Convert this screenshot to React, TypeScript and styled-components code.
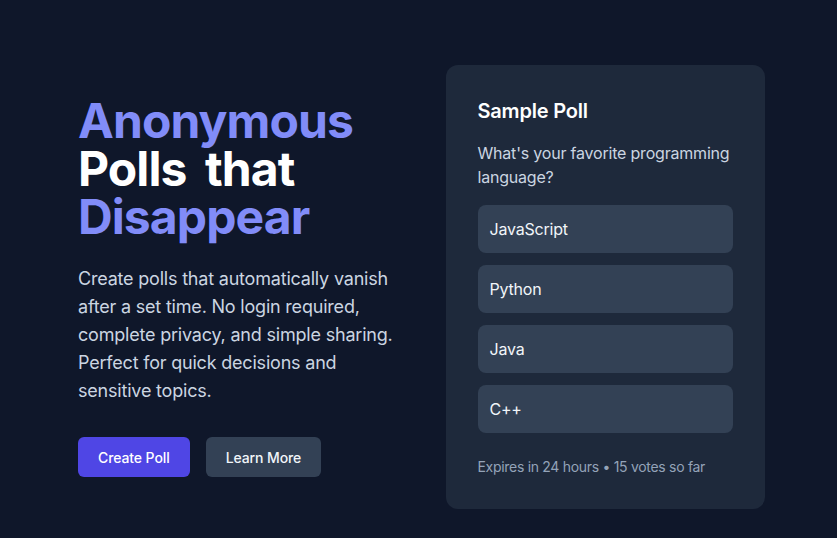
import React from "react";
import styled, { createGlobalStyle } from "styled-components";

const GlobalStyle = createGlobalStyle`
  html, body {
    margin: 0;
    padding: 0;
    background: #0f172a;
  }
  body {
    font-family: Inter, "Noto Sans", "Liberation Sans", sans-serif;
    color: #f8fafc;
    letter-spacing: -0.2px;
    -webkit-font-smoothing: antialiased;
  }
`;

const Page = styled.main`
  min-height: 538px;
  box-sizing: border-box;
  padding: 65px 72px 30px 78px;
`;

const Hero = styled.section`
  display: grid;
  grid-template-columns: 1fr 1fr;
  gap: 48px;
  align-items: center;
  width: 687px;
`;

const Intro = styled.div`
  display: flex;
  flex-direction: column;
`;

const Headline = styled.h1`
  margin: 0 0 24px;
  font-size: 48px;
  line-height: 48px;
  font-weight: 700;
  letter-spacing: -0.9px;
  word-spacing: 8px;
  color: #ffffff;
`;

const Accent = styled.span`
  color: #818cf8;
`;

const Lead = styled.p`
  margin: 0 0 32px;
  font-size: 18px;
  line-height: 28px;
  color: #cbd5e1;
`;

const Actions = styled.div`
  display: flex;
  gap: 16px;
`;

const Button = styled.button<{ $variant?: "primary" | "secondary" }>`
  height: 40px;
  padding: 0 20px;
  border: none;
  border-radius: 6px;
  font-family: inherit;
  font-size: 14px;
  font-weight: 500;
  letter-spacing: -0.1px;
  cursor: pointer;
  background: ${(p) => (p.$variant === "secondary" ? "#334155" : "#4f46e5")};
  color: ${(p) => (p.$variant === "secondary" ? "#f1f5f9" : "#ffffff")};
`;

const Card = styled.div`
  background: #1e293b;
  border-radius: 12px;
  padding: 32px;
`;

const CardTitle = styled.h2`
  margin: 0 0 16px;
  font-size: 20px;
  line-height: 28px;
  font-weight: 600;
  color: #ffffff;
`;

const Question = styled.p`
  margin: 0 0 16px;
  font-size: 16px;
  line-height: 24px;
  color: #cbd5e1;
`;

const Options = styled.div`
  display: flex;
  flex-direction: column;
  gap: 12px;
`;

const Option = styled.div`
  height: 48px;
  display: flex;
  align-items: center;
  padding: 0 12px;
  border-radius: 8px;
  background: #334155;
  font-size: 16px;
  color: #f1f5f9;
`;

const Meta = styled.p`
  margin: 24px 0 0;
  font-size: 14px;
  line-height: 20px;
  letter-spacing: -0.3px;
  color: #94a3b8;
`;

const options = ["JavaScript", "Python", "Java", "C++"];

export default function App() {
  return (
    <>
      <GlobalStyle />
      <Page>
        <Hero>
          <Intro>
            <Headline>
              <Accent>Anonymous</Accent>
              <br />
              Polls that
              <br />
              <Accent>Disappear</Accent>
            </Headline>
            <Lead>
              Create polls that automatically vanish after a set time. No login
              required, complete privacy, and simple sharing. Perfect for quick
              decisions and sensitive topics.
            </Lead>
            <Actions>
              <Button>Create Poll</Button>
              <Button $variant="secondary">Learn More</Button>
            </Actions>
          </Intro>
          <Card>
            <CardTitle>Sample Poll</CardTitle>
            <Question>What's your favorite programming language?</Question>
            <Options>
              {options.map((o) => (
                <Option key={o}>{o}</Option>
              ))}
            </Options>
            <Meta>Expires in 24 hours • 15 votes so far</Meta>
          </Card>
        </Hero>
      </Page>
    </>
  );
}
